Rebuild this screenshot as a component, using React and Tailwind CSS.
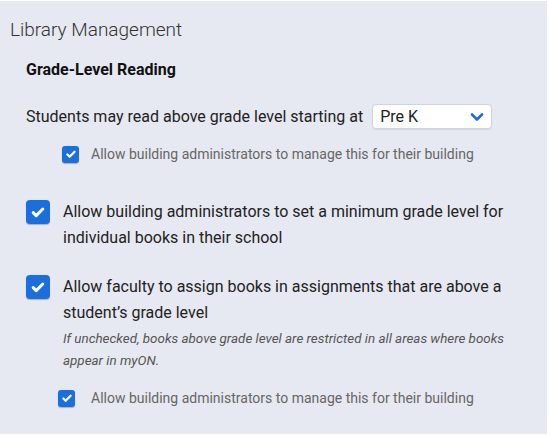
import React from 'react';

const CheckBox = ({ size = 'lg' }) => {
  const box = size === 'lg' ? 'w-6 h-6 rounded-[4px]' : 'w-[17px] h-[17px] rounded-[3px]';
  const icon = size === 'lg' ? 16 : 12;
  return (
    <span className={`${box} bg-[#1a6fdc] flex items-center justify-center shrink-0 shadow-[0_1px_1px_rgba(0,0,0,0.25)]`}>
      <svg width={icon} height={icon} viewBox="0 0 16 16" fill="none">
        <path d="M3.2 8.6l3 3L12.8 5" stroke="white" strokeWidth="3" strokeLinecap="round" strokeLinejoin="round" />
      </svg>
    </span>
  );
};

export default function App() {
  return (
    <div className="w-[549px] h-[435px] bg-white font-['Roboto',sans-serif]">
      <div className="w-[547px] h-[433px] mt-px bg-[#e6e9f1] pl-[10px] pt-[16px]">
        <h2 className="text-[19px] leading-[26px] font-light text-[#333]">Library Management</h2>

        <div className="pl-4">
          <h3 className="mt-[17px] text-[16px] leading-[20px] font-bold text-[#111]">Grade-Level Reading</h3>

          <div className="mt-[24px] flex items-center">
            <span className="text-[16px] text-[#222]">Students may read above grade level starting at</span>
            <div className="ml-[9px] w-[120px] h-[25px] bg-white border border-[#cfd4dc] rounded-[4px] flex items-center justify-between pl-[7px] pr-[7px] shadow-[0_1px_1px_rgba(0,0,0,0.08)]">
              <span className="text-[16px] text-[#222]">Pre K</span>
              <svg width="14" height="10" viewBox="0 0 14 10" fill="none">
                <path d="M2 2.5l5 5 5-5" stroke="#1a6fdc" strokeWidth="2.6" strokeLinecap="round" strokeLinejoin="round" />
              </svg>
            </div>
          </div>

          <div className="mt-[15px] ml-9 flex items-center gap-3">
            <CheckBox size="sm" />
            <span className="text-[14px] leading-[20px] text-[#666]">Allow building administrators to manage this for their building</span>
          </div>

          <div className="mt-[36px] flex items-start gap-[13px]">
            <CheckBox />
            <p className="text-[16px] leading-[26px] text-[#222] -mt-px">
              Allow building administrators to set a minimum grade level for<br />individual books in their school
            </p>
          </div>

          <div className="mt-[24px] flex items-start gap-[13px]">
            <CheckBox />
            <div className="-mt-px">
              <p className="text-[16px] leading-[26px] text-[#222]">
                Allow faculty to assign books in assignments that are above a<br />student’s grade level
              </p>
              <p className="text-[13.4px] leading-[22px] italic text-[#555] mt-[2px]">
                If unchecked, books above grade level are restricted in all areas where books<br />appear in myON.
              </p>
              <div className="mt-[16px] -ml-[5px] flex items-center gap-4">
                <CheckBox size="sm" />
                <span className="text-[14px] leading-[20px] text-[#666]">Allow building administrators to manage this for their building</span>
              </div>
            </div>
          </div>
        </div>
      </div>
    </div>
  );
}
